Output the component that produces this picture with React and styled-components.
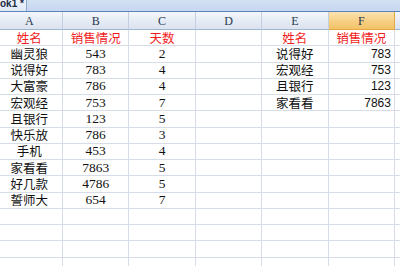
import React from "react";
import styled, { createGlobalStyle } from "styled-components";

const Global = createGlobalStyle`
  html, body { margin: 0; padding: 0; background: #fff; overflow: hidden; }
  body { width: 400px; height: 266px; }
`;

const Page = styled.div`
  width: 400px;
  height: 266px;
  overflow: hidden;
  display: flex;
  flex-direction: column;
  background: #fff;
`;

const TabBar = styled.div`
  height: 11px;
  flex: none;
  display: flex;
  background: linear-gradient(#d3e0f2, #c6d7ef);
  border-bottom: 1px solid #5b83bf;
  overflow: hidden;
`;

const Tab = styled.div`
  width: 27px;
  height: 11px;
  box-sizing: border-box;
  background: linear-gradient(#eef3fa, #dfe8f5);
  border-right: 1px solid #8ea8cc;
  font: bold 10px/7px "Liberation Sans", sans-serif;
  color: #1b2a44;
  white-space: nowrap;
`;

const Sheet = styled.div`
  display: grid;
  grid-template-columns: repeat(6, 66.4px) 40px;
  grid-template-rows: 18px;
  grid-auto-rows: 16.25px;
  margin-left: -3.4px;
`;

const ColHead = styled.div`
  box-sizing: border-box;
  display: flex;
  align-items: center;
  justify-content: center;
  border-right: 1px solid ${(p) => (p.$active ? "#e3a949" : "#c2cfe0")};
  border-bottom: 1px solid ${(p) => (p.$active ? "#e3a949" : "#9fb4cf")};
  background: ${(p) =>
    p.$active
      ? "linear-gradient(#fbe2b0, #f6cf82 55%, #f3c268)"
      : "linear-gradient(#f4f7fc, #e5ebf4 55%, #dbe3ef)"};
  font: 12px/14px "Liberation Serif", serif;
  color: #27384f;
  padding-top: 1px;
`;

const Cell = styled.div`
  box-sizing: border-box;
  border-right: 1px solid #d6dce8;
  border-bottom: 1px solid #d6dce8;
  display: flex;
  align-items: center;
  justify-content: ${(p) => (p.$right ? "flex-end" : "center")};
  padding-right: ${(p) => (p.$right ? "3px" : "0")};
  white-space: nowrap;
  color: ${(p) => (p.$red ? "#f21d1d" : "#111")};
  font-family: ${(p) =>
    p.$kind === "serifnum"
      ? `"Liberation Serif", serif`
      : p.$kind === "sansnum"
      ? `"Liberation Sans", sans-serif`
      : `"Noto Sans CJK SC", sans-serif`};
  font-size: ${(p) =>
    p.$kind === "serifnum" ? "13.5px" : p.$kind === "sansnum" ? "12px" : "12.5px"};
  line-height: 14px;
`;

const left = [
  ["姓名", "销售情况", "天数"],
  ["幽灵狼", "543", "2"],
  ["说得好", "783", "4"],
  ["大富豪", "786", "4"],
  ["宏观经", "753", "7"],
  ["且银行", "123", "5"],
  ["快乐放", "786", "3"],
  ["手机", "453", "4"],
  ["家看看", "7863", "5"],
  ["好几款", "4786", "5"],
  ["誓师大", "654", "7"],
];

const right = [
  ["姓名", "销售情况"],
  ["说得好", "783"],
  ["宏观经", "753"],
  ["且银行", "123"],
  ["家看看", "7863"],
];

const heads = ["A", "B", "C", "D", "E", "F", ""];
const ROWS = 15;

export default function App() {
  const cells = [];
  for (let r = 0; r < ROWS; r++) {
    const L = left[r];
    const R = right[r];
    const isHead = r === 0;
    cells.push(
      <Cell key={`a${r}`} $red={isHead}>{L ? L[0] : ""}</Cell>,
      <Cell key={`b${r}`} $red={isHead} $kind={isHead ? "cjk" : "serifnum"}>
        {L ? L[1] : ""}
      </Cell>,
      <Cell key={`c${r}`} $red={isHead} $kind={isHead ? "cjk" : "serifnum"}>
        {L ? L[2] : ""}
      </Cell>,
      <Cell key={`d${r}`} />,
      <Cell key={`e${r}`} $red={isHead}>{R ? R[0] : ""}</Cell>,
      <Cell key={`f${r}`} $red={isHead} $right={!isHead && !!R} $kind={isHead ? "cjk" : "sansnum"}>
        {R ? R[1] : ""}
      </Cell>,
      <Cell key={`g${r}`} />
    );
  }
  return (
    <Page>
      <Global />
      <TabBar>
        <Tab>ok1 *</Tab>
      </TabBar>
      <Sheet>
        {heads.map((h) => (
          <ColHead key={h || "g"} $active={h === "F"}>{h}</ColHead>
        ))}
        {cells}
      </Sheet>
    </Page>
  );
}
